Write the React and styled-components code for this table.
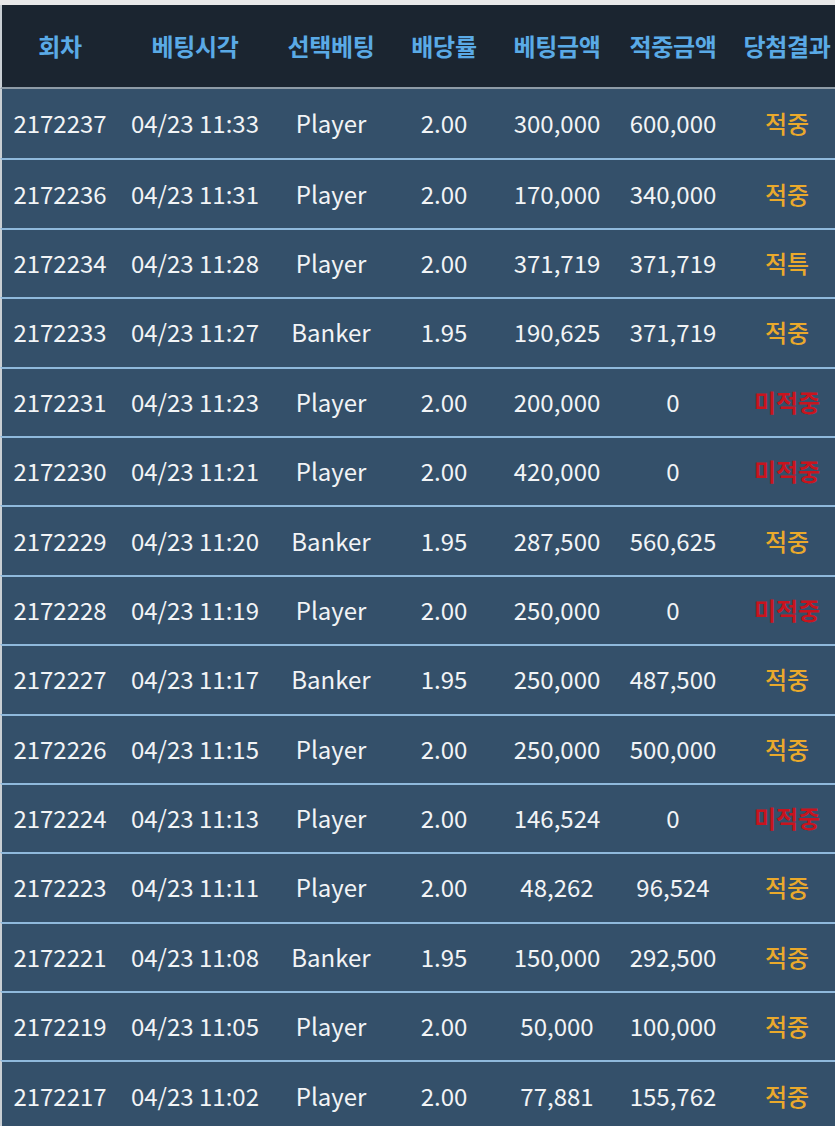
import React from "react"
import styled, { createGlobalStyle } from "styled-components"

const GlobalStyle = createGlobalStyle`
  html, body {
    margin: 0;
    padding: 0;
    background: #e8e8e8;
  }
  body {
    font-family: "Noto Sans CJK KR", "Noto Sans", sans-serif;
  }
`

// the last column runs a little past the right edge, as in the original
const COLUMNS = "116px 154px 118px 108px 118px 114px 114px"

const Page = styled.div`
  width: 835px;
  height: 1126px;
  overflow: hidden;
  padding-top: 5px;
  box-sizing: border-box;
  background: #e8e8e8;
`

const Board = styled.div`
  border-left: 2px solid #c9cfd4;
  background: #34506a;
  height: 100%;
`

const HeadRow = styled.div`
  display: grid;
  grid-template-columns: ${COLUMNS};
  height: 84px;
  margin-left: -2px;
  align-items: center;
  background: #1b2530;
  border-left: 2px solid #c9cfd4;
  border-bottom: 2px solid #8e9ba6;
  box-sizing: border-box;
`

const HeadCell = styled.div`
  text-align: center;
  color: #5aaae6;
  font-weight: 700;
  font-size: 24px;
  letter-spacing: -0.3px;
  white-space: nowrap;
  padding-bottom: 2px;
`

const Row = styled.div`
  display: grid;
  grid-template-columns: ${COLUMNS};
  height: 69.4px;
  margin-left: -2px;
  align-items: center;
  background: #34506a;
  border-top: ${({ $first }) => ($first ? "0" : "2px solid #8fb9dc")};
  border-left: 2px solid #c9cfd4;
  box-sizing: border-box;
`

const Cell = styled.div`
  text-align: center;
  color: #f2f4f6;
  font-size: 24px;
  white-space: nowrap;
  padding-bottom: 2px;
`

const Result = styled(Cell)`
  color: ${({ $win }) => ($win ? "#eaa92c" : "#c8141e")};
  font-weight: ${({ $win }) => ($win ? 500 : 700)};
`

const headers = ["회차", "베팅시각", "선택베팅", "배당률", "베팅금액", "적중금액", "당첨결과"]

const rows = [
  ["2172237", "04/23 11:33", "Player", "2.00", "300,000", "600,000", "적중"],
  ["2172236", "04/23 11:31", "Player", "2.00", "170,000", "340,000", "적중"],
  ["2172234", "04/23 11:28", "Player", "2.00", "371,719", "371,719", "적특"],
  ["2172233", "04/23 11:27", "Banker", "1.95", "190,625", "371,719", "적중"],
  ["2172231", "04/23 11:23", "Player", "2.00", "200,000", "0", "미적중"],
  ["2172230", "04/23 11:21", "Player", "2.00", "420,000", "0", "미적중"],
  ["2172229", "04/23 11:20", "Banker", "1.95", "287,500", "560,625", "적중"],
  ["2172228", "04/23 11:19", "Player", "2.00", "250,000", "0", "미적중"],
  ["2172227", "04/23 11:17", "Banker", "1.95", "250,000", "487,500", "적중"],
  ["2172226", "04/23 11:15", "Player", "2.00", "250,000", "500,000", "적중"],
  ["2172224", "04/23 11:13", "Player", "2.00", "146,524", "0", "미적중"],
  ["2172223", "04/23 11:11", "Player", "2.00", "48,262", "96,524", "적중"],
  ["2172221", "04/23 11:08", "Banker", "1.95", "150,000", "292,500", "적중"],
  ["2172219", "04/23 11:05", "Player", "2.00", "50,000", "100,000", "적중"],
  ["2172217", "04/23 11:02", "Player", "2.00", "77,881", "155,762", "적중"],
]

export default function App() {
  return (
    <Page>
      <GlobalStyle />
      <Board>
        <HeadRow>
          {headers.map((h) => (
            <HeadCell key={h}>{h}</HeadCell>
          ))}
        </HeadRow>
        {rows.map((r, i) => (
          <Row key={r[0]} $first={i === 0}>
            {r.slice(0, 6).map((v, j) => (
              <Cell key={j}>{v}</Cell>
            ))}
            <Result $win={r[6] !== "미적중"}>{r[6]}</Result>
          </Row>
        ))}
      </Board>
    </Page>
  )
}
